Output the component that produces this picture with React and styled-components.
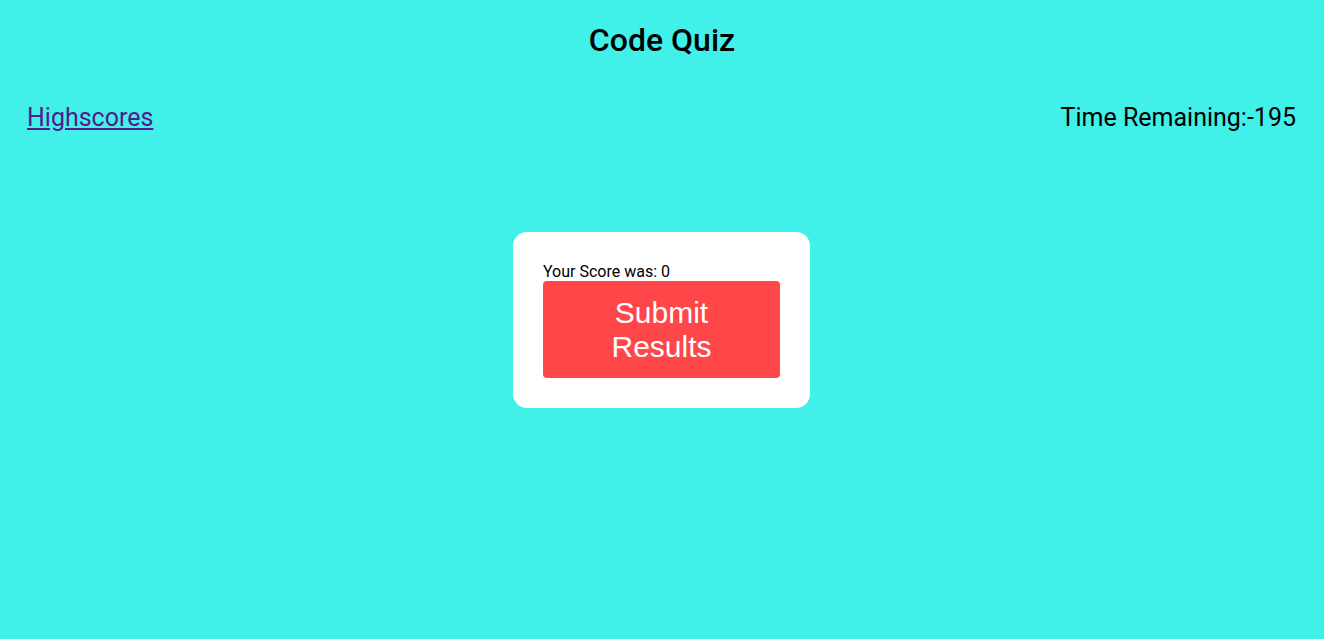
import React from 'react';
import styled, { createGlobalStyle } from 'styled-components'

const GlobalStyle = createGlobalStyle`
  html, body {
    margin: 0;
    padding: 0;
    background-color: #41f0e9;
    font-family: Roboto, "Liberation Sans", sans-serif;
  }
`

const Page = styled.div`
  display: flex;
  flex-direction: column;
  min-height: 639px;
`

const Title = styled.h1`
  margin: 20px 0 0;
  text-align: center;
  font-size: 32px;
  font-weight: 500;
  line-height: 40px;
  color: #000;
`

const TopBar = styled.nav`
  display: flex;
  justify-content: space-between;
  align-items: center;
  padding: 0 28px 0 27px;
  margin-top: 37px;
  height: 40px;
  font-size: 25px;
`

const ScoresLink = styled.a`
  color: #551a8b;
  text-decoration: underline;
`

const Timer = styled.div`
  color: #000;
`

const Card = styled.div`
  align-self: center;
  width: 237px;
  margin: 95px 0 0 -1px;
  padding: 30px;
  background-color: #fff;
  border-radius: 14px;
`

const ScoreText = styled.p`
  margin: 0;
  font-size: 16px;
  line-height: 19px;
  color: #000;
`

const SubmitButton = styled.button`
  display: block;
  width: 100%;
  height: 97px;
  border: none;
  border-radius: 4px;
  background-color: #ff4649;
  color: #fff;
  font-family: "Liberation Sans", Arial, sans-serif;
  font-size: 30px;
  line-height: 34px;
  padding: 1px 50px 0;
`

const App = () => (
  <Page>
    <GlobalStyle />
    <Title>Code Quiz</Title>
    <TopBar>
      <ScoresLink href="#">Highscores</ScoresLink>
      <Timer>Time Remaining:-195</Timer>
    </TopBar>
    <Card>
      <ScoreText>Your Score was: 0</ScoreText>
      <SubmitButton>Submit Results</SubmitButton>
    </Card>
  </Page>
)

export default App;
